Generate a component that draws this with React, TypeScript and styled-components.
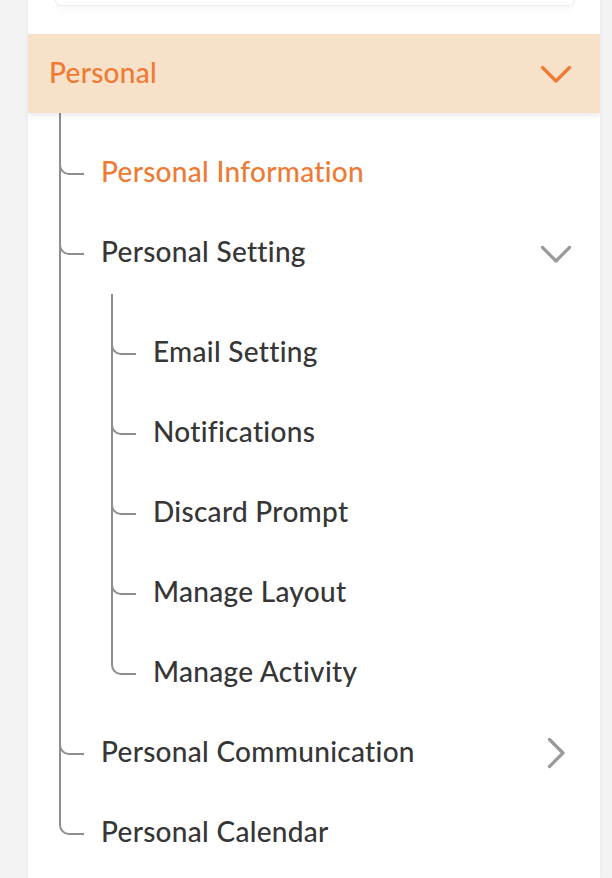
import React from 'react';
import styled, { createGlobalStyle, css } from 'styled-components';

const GlobalStyle = createGlobalStyle`
  html, body {
    margin: 0;
    padding: 0;
    background: #f3f3f3;
  }
  * {
    box-sizing: border-box;
  }
`;

const lineColor = '#8e8e8e';
const orange = '#ef7a33';

interface TreeNode {
  title: string;
  active?: boolean;
  arrow?: 'down' | 'right';
  children?: TreeNode[];
}

const menuData: TreeNode[] = [
  { title: 'Personal Information', active: true },
  {
    title: 'Personal Setting',
    arrow: 'down',
    children: [
      { title: 'Email Setting' },
      { title: 'Notifications' },
      { title: 'Discard Prompt' },
      { title: 'Manage Layout' },
      { title: 'Manage Activity' }
    ]
  },
  { title: 'Personal Communication', arrow: 'right' },
  { title: 'Personal Calendar' }
];

const Chevron = ({ dir, color }: { dir: 'down' | 'right'; color: string }) =>
  dir === 'down' ? (
    <svg width="32" height="19" viewBox="0 0 32 19" fill="none">
      <polyline
        points="2.5,2.5 16,16 29.5,2.5"
        stroke={color}
        strokeWidth="3.2"
        strokeLinecap="round"
        strokeLinejoin="round"
      />
    </svg>
  ) : (
    <svg width="19" height="32" viewBox="0 0 19 32" fill="none">
      <polyline
        points="2.5,2.5 16,16 2.5,29.5"
        stroke={color}
        strokeWidth="3.2"
        strokeLinecap="round"
        strokeLinejoin="round"
      />
    </svg>
  );

const TreeList = ({ items, nested }: { items: TreeNode[]; nested?: boolean }) => (
  <List $nested={nested}>
    {items.map((item) => (
      <Item key={item.title}>
        <Row>
          <Label $active={item.active}>{item.title}</Label>
          {item.arrow && (
            <ArrowBox $dir={item.arrow}>
              <Chevron dir={item.arrow} color="#9a9a9a" />
            </ArrowBox>
          )}
        </Row>
        {item.children && <TreeList items={item.children} nested />}
      </Item>
    ))}
  </List>
);

const App = () => {
  return (
    <Page>
      <GlobalStyle />
      <Panel>
        <SearchCard />
        <Header>
          <HeaderTitle>Personal</HeaderTitle>
          <HeaderArrow>
            <Chevron dir="down" color={orange} />
          </HeaderArrow>
        </Header>
        <TreeList items={menuData} />
      </Panel>
    </Page>
  );
};

export default App;

const Page = styled.div`
  display: flex;
  width: 612px;
  min-height: 878px;
  padding: 0 12px 0 28px;
  font-family: Lato, 'Open Sans', sans-serif;
`;

const Panel = styled.div`
  flex: 1;
  background: #ffffff;
  box-shadow: 0 0 6px rgba(0, 0, 0, 0.05);
  overflow: hidden;
`;

const SearchCard = styled.div`
  height: 6px;
  margin: 0 25px 28px 27px;
  border: 1px solid #ececec;
  border-top: none;
  border-radius: 0 0 12px 12px;
  box-shadow: 0 3px 8px rgba(0, 0, 0, 0.05);
`;

const Header = styled.div`
  display: flex;
  justify-content: space-between;
  align-items: center;
  height: 79px;
  padding: 0 28px 0 21px;
  background: #f8e1c9;
  box-shadow: 0 3px 5px rgba(0, 0, 0, 0.08);
  position: relative;
  z-index: 1;
`;

const HeaderTitle = styled.span`
  color: ${orange};
  font-size: 28px;
  font-weight: 500;
  letter-spacing: 0.3px;
  padding-bottom: 4px;
`;

const HeaderArrow = styled.div`
  display: flex;
  padding-top: 2px;
`;

const List = styled.ul<{ $nested?: boolean }>`
  position: relative;
  list-style: none;
  margin: 0 0 0 ${(p) => (p.$nested ? '52px' : '31px')};
  padding: ${(p) => (p.$nested ? '20px' : '18px')} 0 0 0;

  &::before {
    content: '';
    position: absolute;
    left: 0;
    top: ${(p) => (p.$nested ? '3px' : '0')};
    bottom: 50px;
    width: 2px;
    background: ${lineColor};
  }
`;

const Item = styled.li`
  margin: 0;
  padding: 0;
`;

const Row = styled.div`
  position: relative;
  display: flex;
  align-items: center;
  justify-content: space-between;
  height: 80px;
  padding: 0 28px 0 42px;

  &::before {
    content: '';
    position: absolute;
    left: 0;
    top: 20px;
    width: 23px;
    height: 22px;
    border-left: 2px solid ${lineColor};
    border-bottom: 2px solid ${lineColor};
    border-bottom-left-radius: 10px;
  }
`;

const Label = styled.span<{ $active?: boolean }>`
  font-size: 28px;
  font-weight: 500;
  letter-spacing: 0.3px;
  color: #363636;
  ${(p) =>
    p.$active &&
    css`
      color: ${orange};
    `}
`;

const ArrowBox = styled.div<{ $dir: 'down' | 'right' }>`
  display: flex;
  width: 32px;
  justify-content: center;
  padding-top: ${(p) => (p.$dir === 'down' ? '6px' : '4px')};
`;
